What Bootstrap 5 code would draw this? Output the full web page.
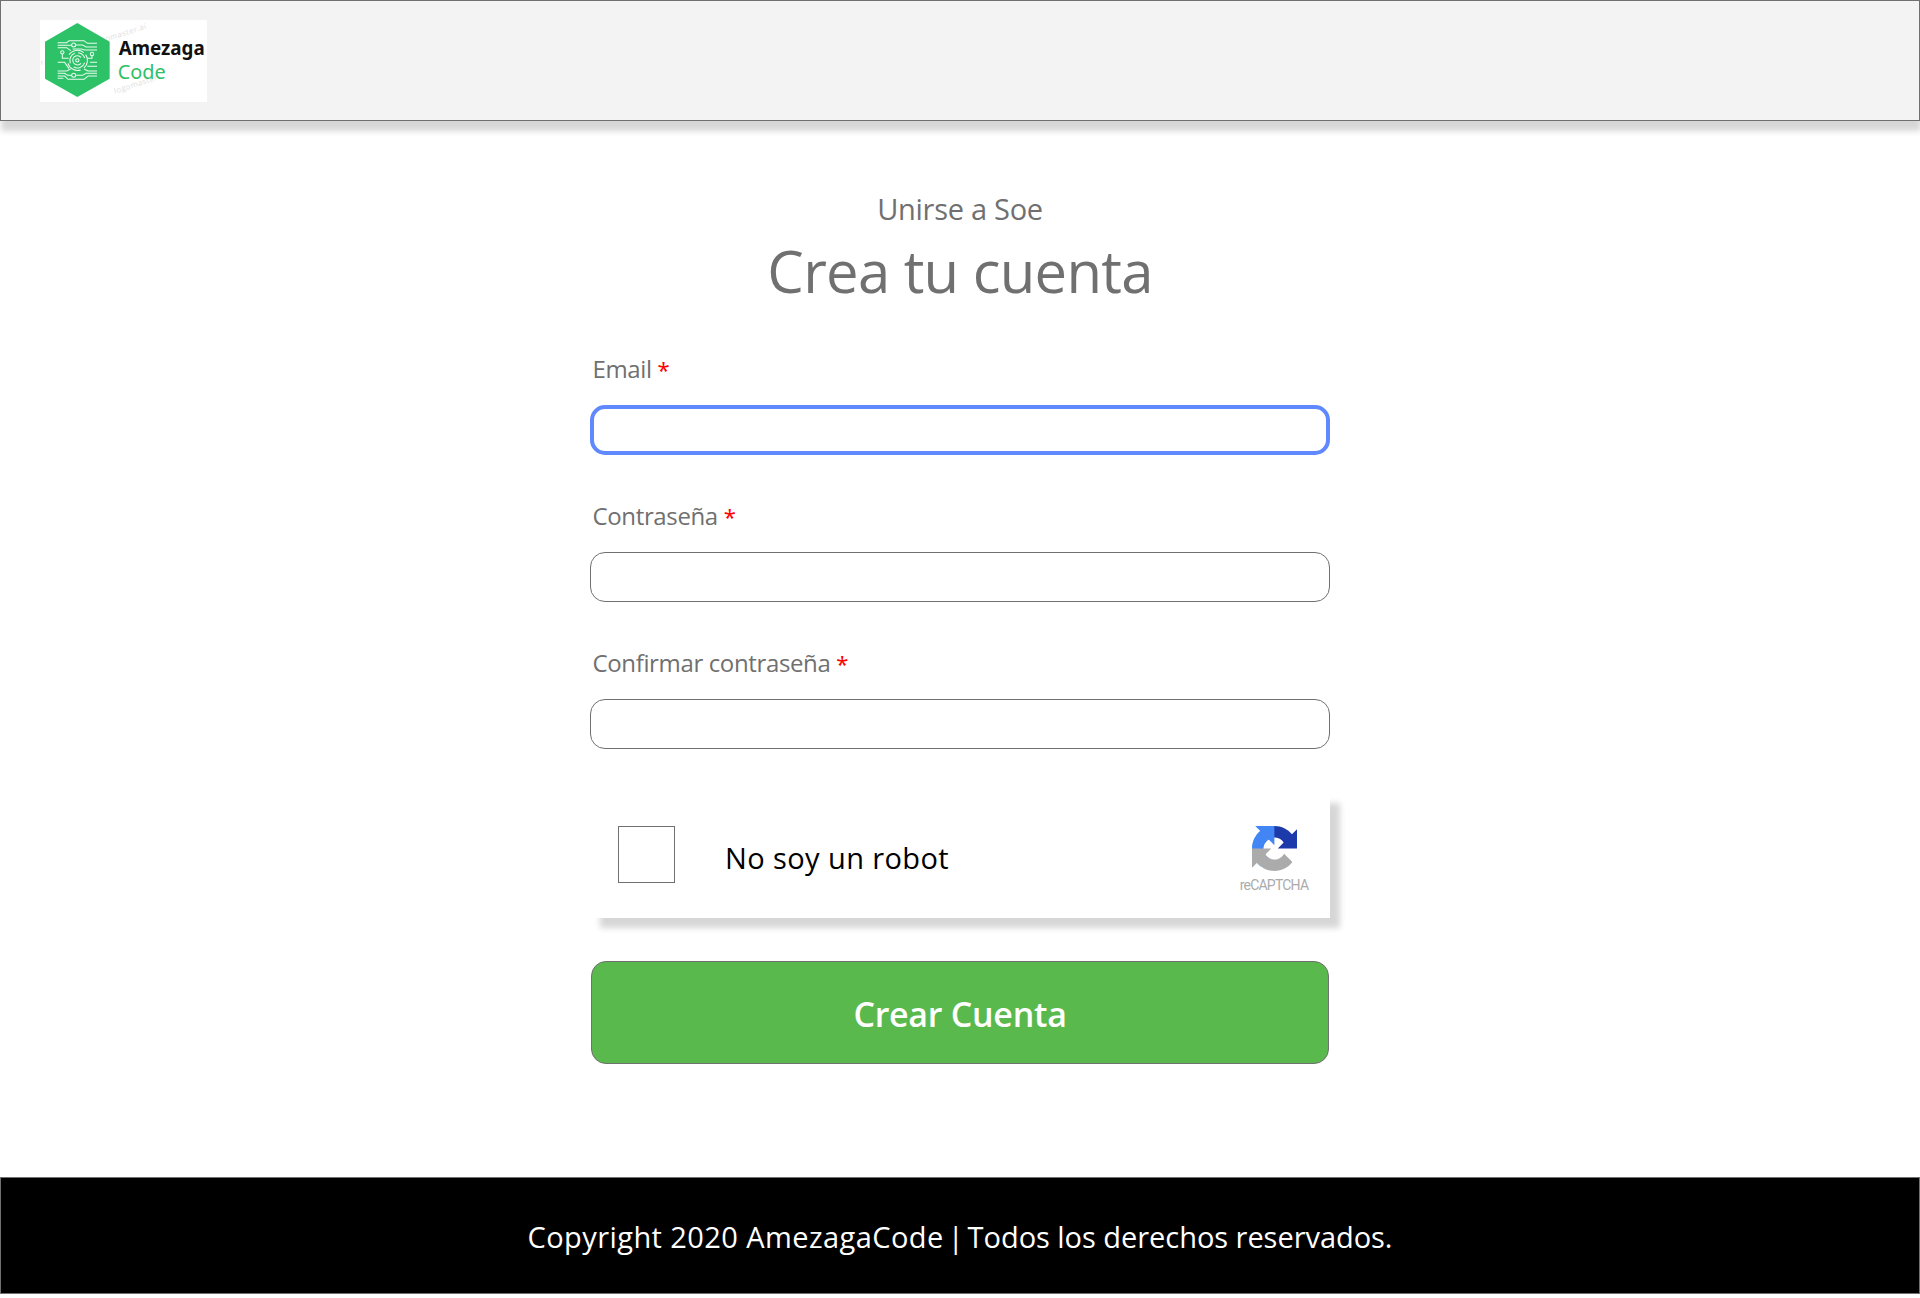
<!DOCTYPE html>
<html lang="es">
<head>
<meta charset="utf-8">
<meta name="viewport" content="width=device-width, initial-scale=1">
<title>Crea tu cuenta</title>
<link href="https://cdn.jsdelivr.net/npm/bootstrap@5.3.0/dist/css/bootstrap.min.css" rel="stylesheet">
<style>
body{font-family:"Open Sans","Noto Sans",sans-serif;color:#707070;background:#fff;min-height:1298px}
.site-header{height:121px;background:#f3f3f3;border:1px solid #707070;box-shadow:1px 10px 6px rgba(0,0,0,.16);padding:19px 39px}
.site-logo{width:167px;height:82px;display:block}
.signup{width:740px;padding-top:68px;height:1056px}
.eyebrow{font-size:29px;line-height:40px;margin-bottom:7px;letter-spacing:-.28px}
.headline{font-size:58px;line-height:70px;margin-bottom:47px;font-weight:400;letter-spacing:-.75px}
.field{margin-bottom:45px}
.field label{font-size:24px;line-height:32px;margin-bottom:20px;padding-left:2.5px;letter-spacing:-.36px}
.field .req{color:#f00;font-family:"Noto Sans",sans-serif;font-size:22px;line-height:1}
.field .form-control{height:50px;border:1px solid #707070;border-radius:15px;box-shadow:none}
.field .form-control.active-field{border:4px solid #6088ff}
.robot{height:125px;margin-top:-1px;box-shadow:10px 10px 6px rgba(0,0,0,.16);padding:0 21px 0 28px;background:#fff}
.robot .form-check-input{width:57px;height:57px;border:1px solid #707070;border-radius:0;margin:0 0 2px}
.robot-text{font-size:29px;line-height:40px;color:#000;margin-left:50px;padding-top:4px;letter-spacing:.4px}
.rc-badge{width:70px;padding-top:7px}
.rc-badge svg{width:45px;height:45px;margin-left:1px}
.rc-text{font-family:Roboto,sans-serif;font-size:14px;line-height:16px;color:#ababab;letter-spacing:-.8px;margin-top:6px;white-space:nowrap}
.create{width:738px;height:103px;margin-top:43px;padding:4px 0 0;background:#5ab94d;border:1px solid #707070;border-radius:15px;color:#fff;font-weight:600;font-size:34px;letter-spacing:-.28px}
.site-footer{height:117px;background:#000;border:1px solid #707070;color:#fff;font-size:29px;padding-top:2px}
.owner{letter-spacing:.42px}
.divider{margin:0 4px}
.rights{letter-spacing:-.04px}
</style>
</head>
<body>
<header class="site-header">
<svg class="site-logo" viewBox="120 60 501 246" role="img" aria-label="Amezaga Code">
<rect x="120" y="60" width="501" height="246" fill="#fff"/>
<g fill="#dedede" font-family="Open Sans, sans-serif" font-size="23" letter-spacing="1.5">
<text transform="translate(284 136) rotate(-18)">logomaster.ai</text>
<text transform="translate(345 281) rotate(-18)">logomaster</text>
<text transform="translate(123 195) rotate(-12)" letter-spacing="0" font-size="20">r.</text>
</g>
<path d="M232 69 329 125V236L232 291 135 236V125Z" fill="#2dc168"/>
<g fill="none" stroke="#eafbf0" stroke-width="3.2">
<path d="M173 128H200L207 122H252L262 130H291M173 136H214M228 135H248L258 141H291M173 143H200L212 152M218 147H244L254 150H291"/>
<path d="M187 163V175H206M276 167V175H262M173 187H194L207 206M291 187H270M291 199H262"/>
<path d="M173 213H200L212 207M291 213H264L252 207M173 220H194L203 226H214M228 226H248L258 220H291M173 228H194L204 238H252L264 228H291M173 235H190"/>
<circle cx="221" cy="135" r="6"/><circle cx="221" cy="226" r="6"/>
<circle cx="187" cy="157" r="5"/><circle cx="276" cy="162" r="5"/>
<circle cx="232" cy="181" r="5"/>
<path d="M243 172A14 14 0 1 0 243 190M224 160A23 23 0 0 0 211 190M221 201A23 23 0 0 0 254 188M234 158A23 23 0 0 1 254 174M207 164A30 30 0 0 1 251 158M204 190A30 30 0 0 0 242 210M257 164A30 30 0 0 1 252 204"/>
</g>
<text x="356" y="165" font-family="Noto Sans, sans-serif" font-weight="700" font-size="59" textLength="258" lengthAdjust="spacingAndGlyphs" fill="#111">Amezaga</text>
<text x="353" y="237" font-family="Noto Sans, sans-serif" font-size="60" textLength="144" lengthAdjust="spacingAndGlyphs" fill="#2dc168">Code</text>
</svg>
</header>
<main class="signup mx-auto d-flex flex-column">
<p class="eyebrow text-center">Unirse a Soe</p>
<h1 class="headline text-center">Crea tu cuenta</h1>
<div class="field"><label for="email">Email <span class="req">*</span></label><input id="email" type="email" class="form-control active-field"></div>
<div class="field"><label for="clave">Contraseña <span class="req">*</span></label><input id="clave" type="password" class="form-control"></div>
<div class="field"><label for="clave2">Confirmar contraseña <span class="req">*</span></label><input id="clave2" type="password" class="form-control"></div>
<div class="robot d-flex align-items-center">
<input type="checkbox" id="robot" class="form-check-input">
<label for="robot" class="robot-text">No soy un robot</label>
<div class="rc-badge ms-auto d-flex flex-column align-items-center">
<svg viewBox="0 0 64 64" aria-hidden="true">
<path fill="#1c3aa9" d="M64 31.955l-.033-1.37V4.687l-7.16 7.16C50.948 4.674 42.033.093 32.05.093c-10.4 0-19.622 4.96-25.458 12.64l11.736 11.86a15.55 15.55 0 0 1 4.754-5.334c2.05-1.6 4.952-2.906 8.968-2.906.485 0 .86.057 1.135.163 4.976.393 9.288 3.14 11.828 7.124l-8.307 8.307L64 31.953"/>
<path fill="#4285f4" d="M31.862.094l-1.37.033H4.594l7.16 7.16C4.58 13.147 0 22.06 0 32.046c0 10.4 4.96 19.622 12.64 25.458L24.5 45.768a15.55 15.55 0 0 1-5.334-4.754c-1.6-2.05-2.906-4.952-2.906-8.968 0-.485.057-.86.163-1.135.393-4.976 3.14-9.288 7.124-11.828l8.307 8.307L31.86.095"/>
<path fill="#ababab" d="M.001 32.045l.033 1.37v25.898l7.16-7.16c5.86 7.173 14.774 11.754 24.76 11.754 10.4 0 19.622-4.96 25.458-12.64l-11.736-11.86a15.55 15.55 0 0 1-4.754 5.334c-2.05 1.6-4.952 2.906-8.968 2.906-.485 0-.86-.057-1.135-.163-4.976-.393-9.288-3.14-11.828-7.124l8.307-8.307c-10.522.04-22.4.066-27.295-.005"/>
</svg>
<span class="rc-text">reCAPTCHA</span>
</div>
</div>
<button type="button" class="create btn align-self-center">Crear Cuenta</button>
</main>
<footer class="site-footer d-flex align-items-center justify-content-center"><span class="owner">Copyright 2020 AmezagaCode</span><span class="divider">|</span><span class="rights">Todos los derechos reservados.</span></footer>
<script src="https://cdn.jsdelivr.net/npm/bootstrap@5.3.0/dist/js/bootstrap.bundle.min.js"></script>
</body>
</html>
